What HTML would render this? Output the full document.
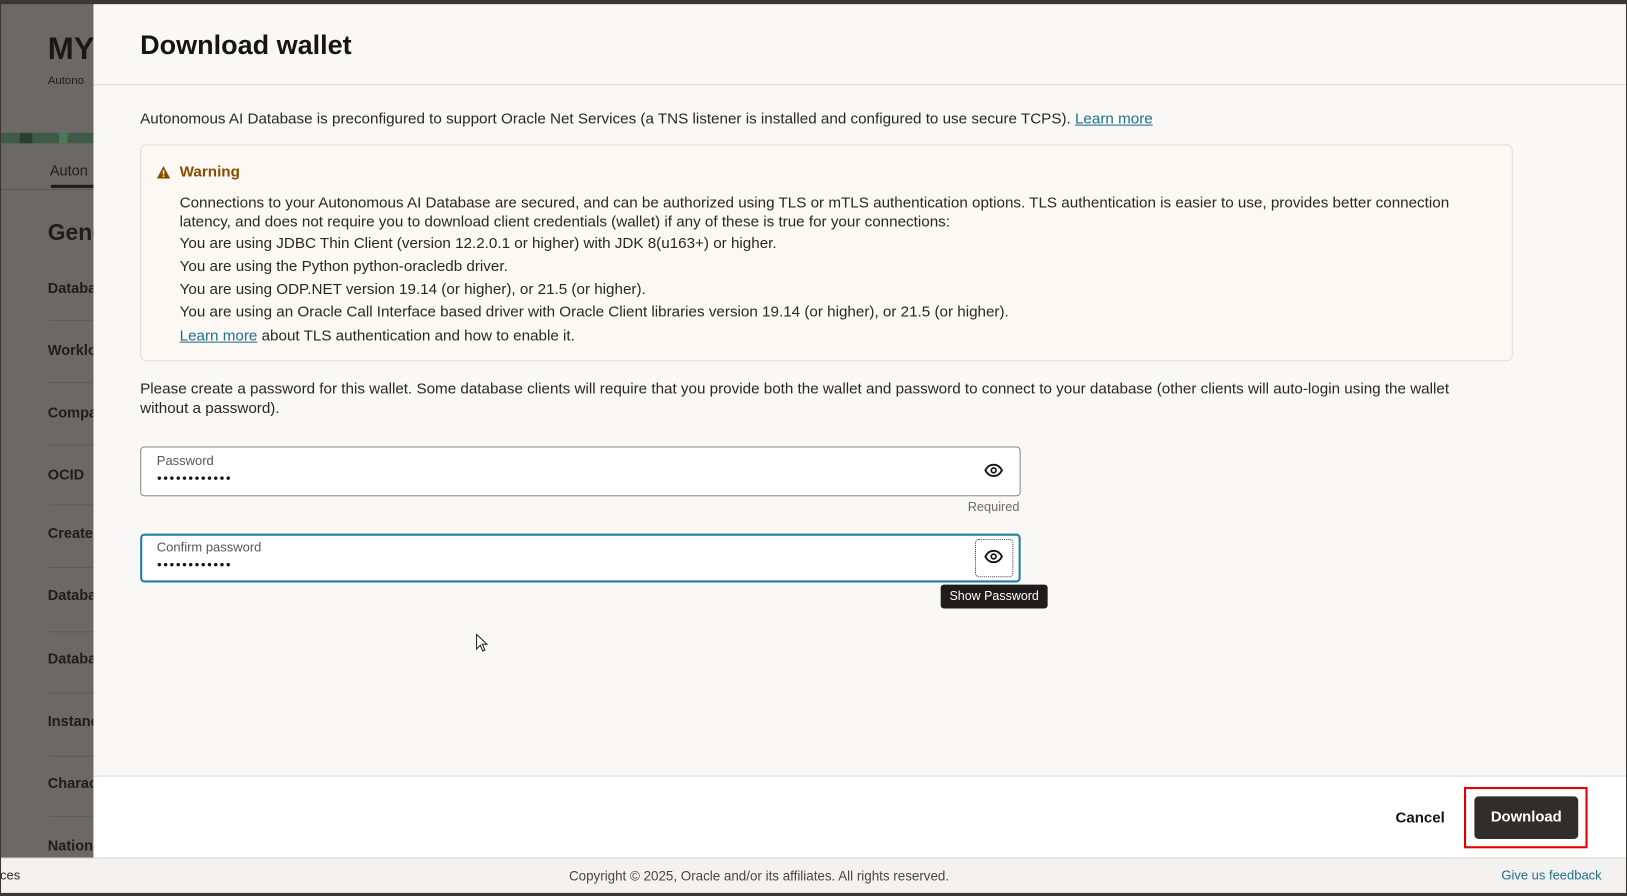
<!DOCTYPE html>
<html><head><meta charset="utf-8"><style>
*{margin:0;padding:0;box-sizing:border-box}
html,body{width:1627px;height:896px;overflow:hidden;background:#3a3835;font-family:"Liberation Sans",sans-serif}
#w{position:absolute;left:0;top:0;width:1567px;height:863px;transform:scale(1.0383);transform-origin:0 0;background:#3a3835}
.a{position:absolute;white-space:nowrap}
#bg{position:absolute;left:1px;top:4px;width:89px;height:822px;background:#6b6866;overflow:hidden}
#bg .b{color:#1f1c1a;font-weight:bold;font-size:14px}
#bg .s{position:absolute;left:46px;width:60px;height:1px;background:#5e5b59}
#dlg{position:absolute;left:90px;top:4px;width:1476px;height:822px;background:#f9f8f6}
.t{font-size:14.65px;color:#2a2724}
.lk{color:#1f6f8f;text-decoration:underline}
.dots{font-size:8px;color:#161513;letter-spacing:1.2px}
</style></head><body><div id="w">
<div id="bg">
 <div class="a" style="left:45px;top:27px;font-size:30px;font-weight:bold;color:#1a1816">MY</div>
 <div class="a" style="left:45px;top:68px;font-size:11px;color:#1f1c1a">Autono</div>
 <div class="a" style="left:0;top:124px;width:89px;height:10px;background:#3f5a47"></div>
 <div class="a" style="left:18px;top:124px;width:12px;height:10px;background:#2c3d31"></div>
 <div class="a" style="left:56px;top:124px;width:8px;height:10px;background:#4a7a58"></div>
 <div class="a" style="left:47px;top:152px;font-size:14px;color:#1f1c1a">Auton</div>
 <div class="a" style="left:48px;top:174px;width:42px;height:3px;background:#1f1c1a"></div>
 <div class="a" style="left:0;top:178px;width:89px;height:1px;background:#5c5a58"></div>
 <div class="a b" style="left:45px;top:207px;font-size:22px">Gene</div>
 <div class="a b" style="left:45px;top:265px">Databa</div><div class="s" style="top:304px"></div>
 <div class="a b" style="left:45px;top:325px">Worklo</div><div class="s" style="top:364px"></div>
 <div class="a b" style="left:45px;top:385px">Compa</div><div class="s" style="top:424px"></div>
 <div class="a b" style="left:45px;top:445px">OCID</div><div class="s" style="top:482px"></div>
 <div class="a b" style="left:45px;top:501px">Create</div><div class="s" style="top:542px"></div>
 <div class="a b" style="left:45px;top:561px">Databa</div><div class="s" style="top:604px"></div>
 <div class="a b" style="left:45px;top:622px">Databa</div><div class="s" style="top:663px"></div>
 <div class="a b" style="left:45px;top:682px">Instanc</div><div class="s" style="top:724px"></div>
 <div class="a b" style="left:45px;top:742px">Charac</div><div class="s" style="top:782px"></div>
 <div class="a b" style="left:45px;top:802px">Nation</div>
</div>
<div id="dlg">
 <div class="a" style="left:45px;top:24px;font-size:26px;font-weight:bold;color:#161513">Download wallet</div>
 <div class="a" style="left:0;top:77px;width:1476px;height:1px;background:#dedbd7"></div>
 <div class="a t" style="left:45px;top:103px">Autonomous AI Database is preconfigured to support Oracle Net Services (a TNS listener is installed and configured to use secure TCPS). <span class="lk">Learn more</span></div>
 <div class="a" style="left:45px;top:135px;width:1322px;height:209px;background:#fcf8f3;border:1px solid #e2dfda;border-radius:6px">
  <svg class="a" style="left:15px;top:20px" width="13" height="12" viewBox="0 0 13 12"><path d="M6.5 0L13 12H0Z" fill="#8a4d00"/><rect x="5.8" y="4" width="1.4" height="4" fill="#fff"/><rect x="5.8" y="9" width="1.4" height="1.4" fill="#fff"/></svg>
  <div class="a" style="left:37px;top:18px;font-size:14.65px;font-weight:bold;color:#8a4d00">Warning</div>
  <div class="a t" style="left:37px;top:47px;line-height:18px">Connections to your Autonomous AI Database are secured, and can be authorized using TLS or mTLS authentication options. TLS authentication is easier to use, provides better connection<br>latency, and does not require you to download client credentials (wallet) if any of these is true for your connections:</div>
  <div class="a t" style="left:37px;top:87px">You are using JDBC Thin Client (version 12.2.0.1 or higher) with JDK 8(u163+) or higher.</div>
  <div class="a t" style="left:37px;top:109px">You are using the Python python-oracledb driver.</div>
  <div class="a t" style="left:37px;top:131px">You are using ODP.NET version 19.14 (or higher), or 21.5 (or higher).</div>
  <div class="a t" style="left:37px;top:153px">You are using an Oracle Call Interface based driver with Oracle Client libraries version 19.14 (or higher), or 21.5 (or higher).</div>
  <div class="a t" style="left:37px;top:176px"><span class="lk">Learn more</span> about TLS authentication and how to enable it.</div>
 </div>
 <div class="a t" style="left:45px;top:362px;line-height:19px">Please create a password for this wallet. Some database clients will require that you provide both the wallet and password to connect to your database (other clients will auto-login using the wallet<br>without a password).</div>
 <div class="a" style="left:45px;top:426px;width:848px;height:48px;background:#fff;border:1px solid #8a8886;border-radius:4px">
  <div class="a" style="left:15px;top:6px;font-size:12.5px;color:#5a5652">Password</div>
  <div class="a dots" style="left:15px;top:25px">●●●●●●●●●●●●</div>
 </div>
 <div class="a" style="left:45px;top:510px;width:848px;height:47px;background:#fff;border:2px solid #227e9e;border-radius:4px">
  <div class="a" style="left:14px;top:4px;font-size:12.5px;color:#5a5652">Confirm password</div>
  <div class="a dots" style="left:14px;top:23px">●●●●●●●●●●●●</div>
  <div class="a" style="left:802px;top:3px;width:37px;height:37px;border:1px dotted #333;border-radius:4px"></div>
 </div>
 <svg class="a" style="left:858px;top:442px" width="18" height="14" viewBox="0 0 18 14"><path d="M1 7C3 3 6 1.5 9 1.5S15 3 17 7C15 11 12 12.5 9 12.5S3 11 1 7Z" fill="none" stroke="#161513" stroke-width="1.8"/><circle cx="9" cy="7" r="2.3" fill="none" stroke="#161513" stroke-width="1.6"/></svg>
 <svg class="a" style="left:858px;top:525px" width="18" height="14" viewBox="0 0 18 14"><path d="M1 7C3 3 6 1.5 9 1.5S15 3 17 7C15 11 12 12.5 9 12.5S3 11 1 7Z" fill="none" stroke="#161513" stroke-width="1.8"/><circle cx="9" cy="7" r="2.3" fill="none" stroke="#161513" stroke-width="1.6"/></svg>
 <div class="a" style="left:842px;top:477px;font-size:12.3px;color:#6f6b67">Required</div>
 <div class="a" style="left:816px;top:559px;width:103px;height:23px;background:#1f1d1b;border-radius:3px;color:#fff;font-size:12px;line-height:23px;text-align:center">Show Password</div>
 <svg class="a" style="left:368px;top:606px" width="12" height="18" viewBox="0 0 12 18"><path d="M1 1V15L4.5 11.5L7 17L9 16L6.5 10.5H11Z" fill="#fff" stroke="#222" stroke-width="1"/></svg>
 <div class="a" style="left:0;top:743px;width:1476px;height:79px;background:#fff;border-top:1px solid #dedbd7"></div>
 <div class="a" style="left:1254px;top:776px;font-size:14.5px;font-weight:bold;color:#161513">Cancel</div>
 <div class="a" style="left:1320px;top:754px;width:119px;height:59px;border:2px solid #e00000"></div>
 <div class="a" style="left:1330px;top:763px;width:100px;height:41px;background:#312d2a;border-radius:4px;color:#fff;font-size:14.3px;font-weight:bold;line-height:41px;text-align:center">Download</div>
</div>
<div class="a" style="left:1px;top:826px;width:1565px;height:34px;background:#f3f2f0;border-top:1px solid #dcd9d5"></div>
<div class="a" style="left:0;top:836px;font-size:12.5px;color:#2a2724">ces</div>
<div class="a" style="left:548px;top:836px;font-size:12.9px;color:#4a4642">Copyright © 2025, Oracle and/or its affiliates. All rights reserved.</div>
<div class="a" style="left:1446px;top:836px;font-size:12.5px;color:#1f6f8f">Give us feedback</div>
</div></body></html>
